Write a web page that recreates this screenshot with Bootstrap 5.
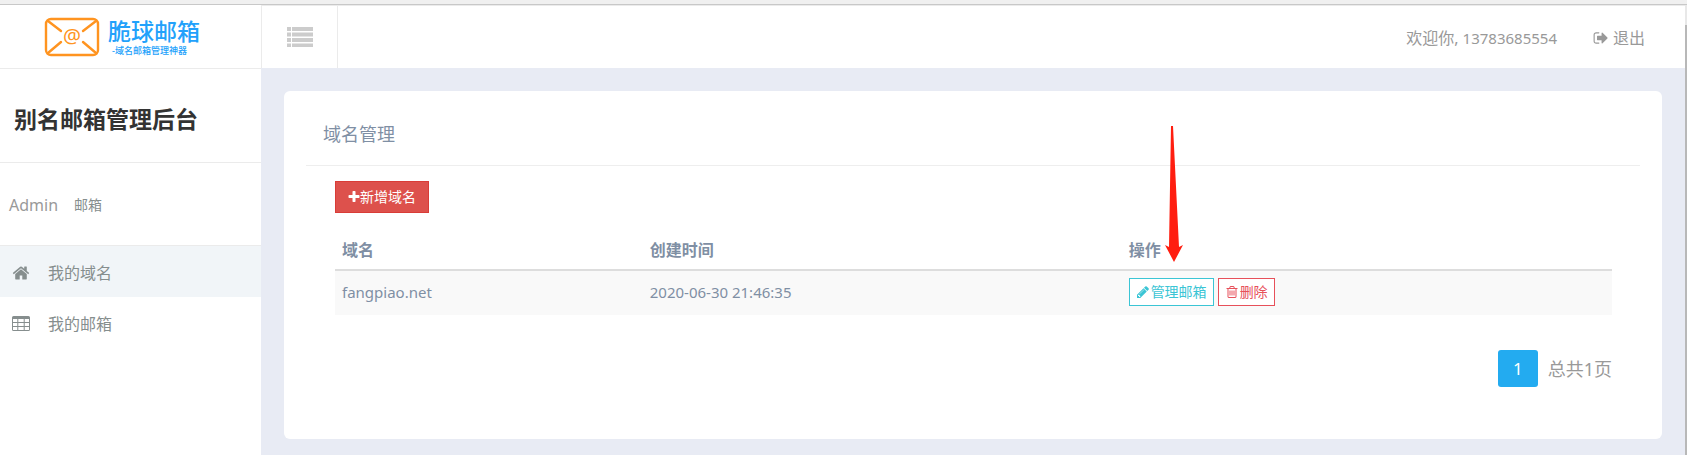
<!DOCTYPE html>
<html lang="zh-CN">
<head>
<meta charset="utf-8">
<meta name="viewport" content="width=device-width, initial-scale=1">
<title>域名管理</title>
<link href="https://cdn.jsdelivr.net/npm/bootstrap@5.3.0/dist/css/bootstrap.min.css" rel="stylesheet">
<style>
  body { font-family: "Noto Sans", "Noto Sans CJK SC", sans-serif; font-size: 16px; line-height: 24px; color: #999; background: #fff; }
  a { color: inherit; text-decoration: none; }
  .latin { font-size: 15px; }
  .fa-svg { fill: currentColor; flex: none; }
  .window-edge { height: 5px; background: #f0f0f0; border-bottom: 1px solid #c8c8c8; }
  .side { width: 261px; flex: none; }
  .line-b { border-bottom: 1px solid #ebebeb; }
  .brand-row { height: 64px; padding-left: 44px; gap: 8px; }
  .brand-name { color: #22a1fb; font-size: 23px; line-height: 28px; font-weight: 500; }
  .brand-sub { color: #22a1fb; font-size: 9px; line-height: 12px; font-weight: 500; padding-left: 4px; }
  .side-title { font-size: 23px; line-height: 28px; font-weight: 700; color: #333; padding: 36px 14px 29px; margin: 0; }
  .side-user { padding: 30px 9px 28px; gap: 16px; }
  .side-user small { font-size: 14px; color: #868e8e; }
  .side-link { color: #868e8e; padding: 15px 12px 12px; gap: 18px; }
  .side-link.active { background: #f1f5f8; }
  .main-area { background: #e8ebf4; min-width: 0; }
  .topbar { height: 63px; background: #fff; border-top: 1px solid #ebebeb; }
  .toggle-btn { width: 77px; border: solid #ebebeb; border-width: 0 1px; background: #fff; color: #ccc; }
  .top-links { gap: 36px; padding-right: 40px; padding-top: 1px; }
  .content-pad { padding: 23px 23px 16px; }
  .panel { background: #fff; border-radius: 6px; padding: 22px 22px 52px; }
  .panel-head { font-size: 18px; line-height: 28px; color: #7f8fa4; padding: 7px 17px 17px; margin: 0; border-bottom: 1px solid #eee; }
  .panel-content { padding: 15px 28px 0 29px; }
  .btn-add { --bs-btn-color: #fff; --bs-btn-bg: #dd514c; --bs-btn-border-color: #d93c37; --bs-btn-hover-color: #fff; --bs-btn-hover-bg: #d7342e; font-size: 14px; line-height: 20px; padding: 5px 12px; border-radius: 0; }
  .domain-table { table-layout: fixed; color: #7f8fa4; margin: 18px 0 35px; }
  .domain-table > :not(caption) > * > * { padding: 7px; box-shadow: none; border: 0; color: inherit; background: transparent; }
  .domain-table > thead > tr > th { border-bottom: 2px solid #ddd; }
  .domain-table > tbody > tr > td { background: #f9f9f9; height: 45px; vertical-align: middle; padding-bottom: 9px; }
  .c-name { width: 24.1%; }
  .c-time { width: 37.5%; }
  .btn-op { font-size: 14px; line-height: 20px; padding: 3px 6px; border-radius: 0; background: #fff; gap: 1px; }
  .btn-edit { --bs-btn-color: #3bc5d5; --bs-btn-border-color: #3bc5d5; }
  .btn-del { --bs-btn-color: #e7505a; --bs-btn-border-color: #e7505a; }
  .pointer-arrow { position: absolute; left: 42px; bottom: 7px; }
  .pager { font-size: 18px; gap: 10px; }
  .pager .page-link { background: #23abf0; border: 0; color: #fff; font-size: 17px; line-height: 21px; padding: 8px 15px; border-radius: 3px; }
  .scroll-edge { width: 2px; flex: none; background: #b8b8b8; border-top: 20px solid #e8e8e8; }
</style>
</head>
<body>
<div class="d-flex flex-column min-vh-100">
  <div class="window-edge"></div>
  <div class="d-flex flex-grow-1">
    <aside class="side">
      <a href="#" class="brand-row d-flex align-items-center line-b">
        <svg width="56" height="40" viewBox="0 0 56 40" fill="none" stroke="#ff9420" stroke-width="2.4" stroke-linecap="round" aria-hidden="true">
          <rect x="2" y="2" width="52" height="36" rx="5"/>
          <path d="M4 4l13 10M52 4l-13 10M4 36l13-11M52 36l-13-11" />
          <text x="28" y="26" text-anchor="middle" font-size="20" fill="#ff9420" stroke="none">@</text>
        </svg>
        <span class="d-flex flex-column">
          <span class="brand-name">脆球邮箱</span>
          <span class="brand-sub">-域名邮箱管理神器</span>
        </span>
      </a>
      <h1 class="side-title line-b">别名邮箱管理后台</h1>
      <div class="side-user d-flex align-items-center line-b"><span>Admin</span><small>邮箱</small></div>
      <nav class="d-flex flex-column">
        <a href="#" class="side-link active d-flex align-items-center">
          <svg class="fa-svg" width="18" height="18" viewBox="0 0 1792 1792" aria-hidden="true"><path d="M1472 992v480q0 26-19 45t-45 19h-384v-384h-256v384h-384q-26 0-45-19t-19-45v-480q0-1 .5-3t.5-3l575-474 575 474q1 2 1 6zm223-69l-62 74q-8 9-21 11h-3q-13 0-21-7l-692-577-692 577q-12 8-24 7-13-2-21-11l-62-74q-8-10-7-23.5t11-21.5l719-599q32-26 76-26t76 26l244 204v-195q0-14 9-23t23-9h192q14 0 23 9t9 23v408l219 182q10 8 11 21.5t-7 23.5z"/></svg>
          <span>我的域名</span>
        </a>
        <a href="#" class="side-link d-flex align-items-center">
          <svg class="fa-svg" width="18" height="18" viewBox="0 0 18 18" aria-hidden="true"><path fill-rule="evenodd" d="M1.500 1h15q1.500 0 1.500 1.500v12q0 1.500-1.500 1.500h-15Q0 16 0 14.500v-12Q0 1 1.500 1zM1 4v3h4.300V4zm5.300 0v3h5.400V4zm6.400 0v3H17V4zM1 8v3h4.300V8zm5.300 0v3h5.400V8zm6.400 0v3H17V8zM1 12v3h4.300v-3zm5.300 0v3h5.400v-3zm6.400 0v3H17v-3z"/></svg>
          <span>我的邮箱</span>
        </a>
      </nav>
    </aside>

    <div class="main-area flex-grow-1">
      <header class="topbar d-flex justify-content-between">
        <button type="button" class="toggle-btn d-flex align-items-center justify-content-center" aria-label="切换菜单">
          <svg class="fa-svg" width="26" height="20" viewBox="0 0 26 20" aria-hidden="true"><path d="M0 0h4v4H0zm5 0h21v4H5zM0 5.500h4v4H0zm5 0h21v4H5zM0 11h4v4H0zm5 0h21v4H5zM0 16.500h4v3.500H0zm5 0h21v3.500H5z"/></svg>
        </button>
        <div class="top-links d-flex align-items-center">
          <span>欢迎你, <span class="latin">13783685554</span></span>
          <a href="#" class="d-flex align-items-center gap-1">
            <svg class="fa-svg" width="16" height="16" viewBox="0 0 1792 1792" aria-hidden="true"><path d="M704 1440q0 4 1 20t.5 26.500-3 23.500-10 19.500-20.500 6.500h-320q-119 0-203.500-84.500t-84.500-203.500v-704q0-119 84.500-203.500t203.500-84.500h320q13 0 22.500 9.500t9.500 22.500q0 4 1 20t.5 26.500-3 23.500-10 19.500-20.500 6.500h-320q-66 0-113 47t-47 113v704q0 66 47 113t113 47h312l11.500 1 11.500 3 8 5.500 7 9 2 13.500zm928-544q0 26-19 45l-544 544q-19 19-45 19t-45-19-19-45v-288h-448q-26 0-45-19t-19-45v-384q0-26 19-45t45-19h448v-288q0-26 19-45t45-19 45 19l544 544q19 19 19 45z"/></svg>
            <span>退出</span>
          </a>
        </div>
      </header>

      <main class="content-pad">
        <section class="panel">
          <h2 class="panel-head fw-normal">域名管理</h2>
          <div class="panel-content">
            <button type="button" class="btn btn-add d-inline-flex align-items-center">
              <svg class="fa-svg" width="12" height="14" viewBox="128 0 1536 1792" aria-hidden="true"><path d="M1600 736v192q0 40-28 68t-68 28h-416v416q0 40-28 68t-68 28h-192q-40 0-68-28t-28-68v-416h-416q-40 0-68-28t-28-68v-192q0-40 28-68t68-28h416v-416q0-40 28-68t68-28h192q40 0 68 28t28 68v416h416q40 0 68 28t28 68z"/></svg><span>新增域名</span>
            </button>
            <table class="table domain-table">
              <thead>
                <tr>
                  <th scope="col" class="c-name">域名</th>
                  <th scope="col" class="c-time">创建时间</th>
                  <th scope="col" class="position-relative">操作
                    <svg class="pointer-arrow" width="20" height="136" viewBox="0 0 20 136" aria-hidden="true"><path fill="#ff1e10" d="M7 0h2l6 121 4-2-9 17-9-17 4 2z"/></svg>
                  </th>
                </tr>
              </thead>
              <tbody>
                <tr>
                  <td class="latin">fangpiao.net</td>
                  <td class="latin">2020-06-30 21:46:35</td>
                  <td>
                    <div class="d-flex gap-1">
                      <button type="button" class="btn btn-op btn-edit d-inline-flex align-items-center">
                        <svg class="fa-svg" width="14" height="14" viewBox="0 0 1792 1792" aria-hidden="true"><path d="M491 1536l91-91-235-235-91 91v107h128v128h107zm523-928q0-22-22-22-10 0-17 7l-542 542q-7 7-7 17 0 22 22 22 10 0 17-7l542-542q7-7 7-17zm-54-192l416 416-832 832h-416v-416zm683 96q0 53-37 90l-166 166-416-416 166-165q36-38 90-38 53 0 91 38l235 234q37 39 37 91z"/></svg>
                        <span>管理邮箱</span>
                      </button>
                      <button type="button" class="btn btn-op btn-del d-inline-flex align-items-center">
                        <svg class="fa-svg" width="14" height="14" viewBox="0 0 1792 1792" aria-hidden="true"><path d="M704 736v576q0 14-9 23t-23 9h-64q-14 0-23-9t-9-23v-576q0-14 9-23t23-9h64q14 0 23 9t9 23zm256 0v576q0 14-9 23t-23 9h-64q-14 0-23-9t-9-23v-576q0-14 9-23t23-9h64q14 0 23 9t9 23zm256 0v576q0 14-9 23t-23 9h-64q-14 0-23-9t-9-23v-576q0-14 9-23t23-9h64q14 0 23 9t9 23zm128 724v-948h-896v948q0 22 7 40.500t14.500 27 10.500 8.500h832q3 0 10.500-8.500t14.500-27 7-40.500zm-672-1076h448l-48-117q-7-9-17-11h-317q-10 2-17 11zm928 32v64q0 14-9 23t-23 9h-96v948q0 83-47 143.500t-113 60.500h-832q-66 0-113-58.500t-47-141.500v-952h-96q-14 0-23-9t-9-23v-64q0-14 9-23t23-9h309l70-167q15-37 54-63t79-26h320q40 0 79 26t54 63l70 167h309q14 0 23 9t9 23z"/></svg>
                        <span>删除</span>
                      </button>
                    </div>
                  </td>
                </tr>
              </tbody>
            </table>
            <nav class="pager d-flex justify-content-end align-items-center" aria-label="分页">
              <a class="page-link" href="#">1</a>
              <span>总共1页</span>
            </nav>
          </div>
        </section>
      </main>
    </div>
    <div class="scroll-edge"></div>
  </div>
</div>
<script src="https://cdn.jsdelivr.net/npm/bootstrap@5.3.0/dist/js/bootstrap.bundle.min.js"></script>
</body>
</html>
